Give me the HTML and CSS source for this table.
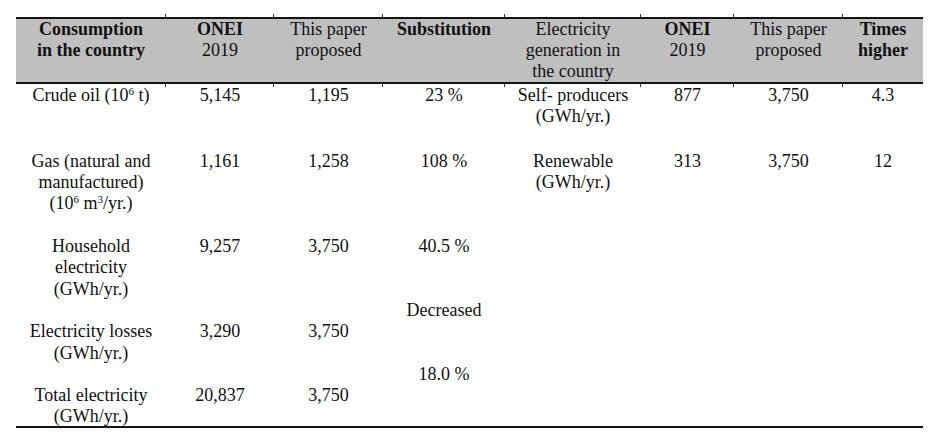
FILE: index.html
```html
<!DOCTYPE html>
<html lang="en">
<head>
<meta charset="utf-8">
<title>Consumption and electricity generation</title>
<link rel="stylesheet" href="styles.css">
</head>
<body>
<div class="page">
  <table class="data">
    <colgroup>
      <col class="w150"><col class="w108"><col class="w109"><col class="w122">
      <col class="w136"><col class="w93"><col class="w109"><col class="w80">
    </colgroup>
    <thead>
      <tr>
        <th><b>Consumption<br>in the country</b></th>
        <th class="tick"><b>ONEI</b><br>2019</th>
        <th class="tick">This paper<br>proposed</th>
        <th class="tick"><b>Substitution</b></th>
        <th class="tick">Electricity<br>generation in<br>the country</th>
        <th class="tick"><b>ONEI</b><br>2019</th>
        <th class="tick">This paper<br>proposed</th>
        <th class="tick"><b>Times<br>higher</b></th>
      </tr>
    </thead>
    <tbody>
      <tr class="first">
        <td>Crude oil (10<sup>6</sup> t)</td>
        <td>5,145</td>
        <td>1,195</td>
        <td>23 %</td>
        <td>Self- producers<br>(GWh/yr.)</td>
        <td>877</td>
        <td>3,750</td>
        <td>4.3</td>
      </tr>
      <tr class="gap-after">
        <td>Gas (natural and<br>manufactured)<br>(10<sup>6</sup> m<sup>3</sup>/yr.)</td>
        <td>1,161</td>
        <td>1,258</td>
        <td>108 %</td>
        <td>Renewable<br>(GWh/yr.)</td>
        <td>313</td>
        <td>3,750</td>
        <td>12</td>
      </tr>
      <tr>
        <td>Household<br>electricity<br>(GWh/yr.)</td>
        <td>9,257</td>
        <td>3,750</td>
        <td>40.5 %<span class="later">Decreased</span></td>
        <td></td><td></td><td></td><td></td>
      </tr>
      <tr>
        <td>Electricity losses<br>(GWh/yr.)</td>
        <td>3,290</td>
        <td>3,750</td>
        <td><span class="later">18.0 %</span></td>
        <td></td><td></td><td></td><td></td>
      </tr>
      <tr class="last">
        <td><span class="tight">Total electricity<br>(GWh/yr.)</span></td>
        <td>20,837</td>
        <td>3,750</td>
        <td></td>
        <td></td><td></td><td></td><td></td>
      </tr>
    </tbody>
  </table>
</div>
</body>
</html>
```
FILE: styles.css
```css
html, body {
  margin: 0;
  padding: 0;
  background: #ffffff;
}

.page {
  padding: 17px 16px 0 16px;
}

.data {
  width: 907px;
  table-layout: fixed;
  border-collapse: separate;
  border-spacing: 0;
  font-family: "Liberation Serif", "Times New Roman", serif;
  font-size: 18px;
  color: #111111;
}

.w150 { width: 150px; }
.w108 { width: 108px; }
.w109 { width: 109px; }
.w122 { width: 122px; }
.w136 { width: 136px; }
.w93  { width: 93px; }
.w80  { width: 80px; }

.data th,
.data td {
  padding: 0 6px;
  text-align: center;
  vertical-align: top;
  white-space: nowrap;
}

.data th {
  position: relative;
  font-weight: normal;
  line-height: 21px;
  height: 63px;
  background: #bfbfbf;
  border-top: 2px solid #141414;
  border-bottom: 2px solid #141414;
}

.data th.tick::before,
.data th.tick::after {
  content: "";
  position: absolute;
  left: -1px;
  width: 1px;
  height: 3px;
  background: #333333;
}

.data th.tick::before { top: -5px; }
.data th.tick::after { bottom: -5px; }

.data td {
  line-height: 21.3px;
}

.data tr.first td {
  padding-top: 1px;
  padding-bottom: 23.3px;
}

.data tr.gap-after td {
  padding-bottom: 21.3px;
}

.data tr.last td {
  border-bottom: 2px solid #141414;
}

.tight {
  display: block;
  margin-bottom: -2px;
}

.data sup {
  font-size: 11px;
  line-height: 0;
  vertical-align: 6px;
}

.later {
  display: block;
  margin-top: 42.6px;
}
```
